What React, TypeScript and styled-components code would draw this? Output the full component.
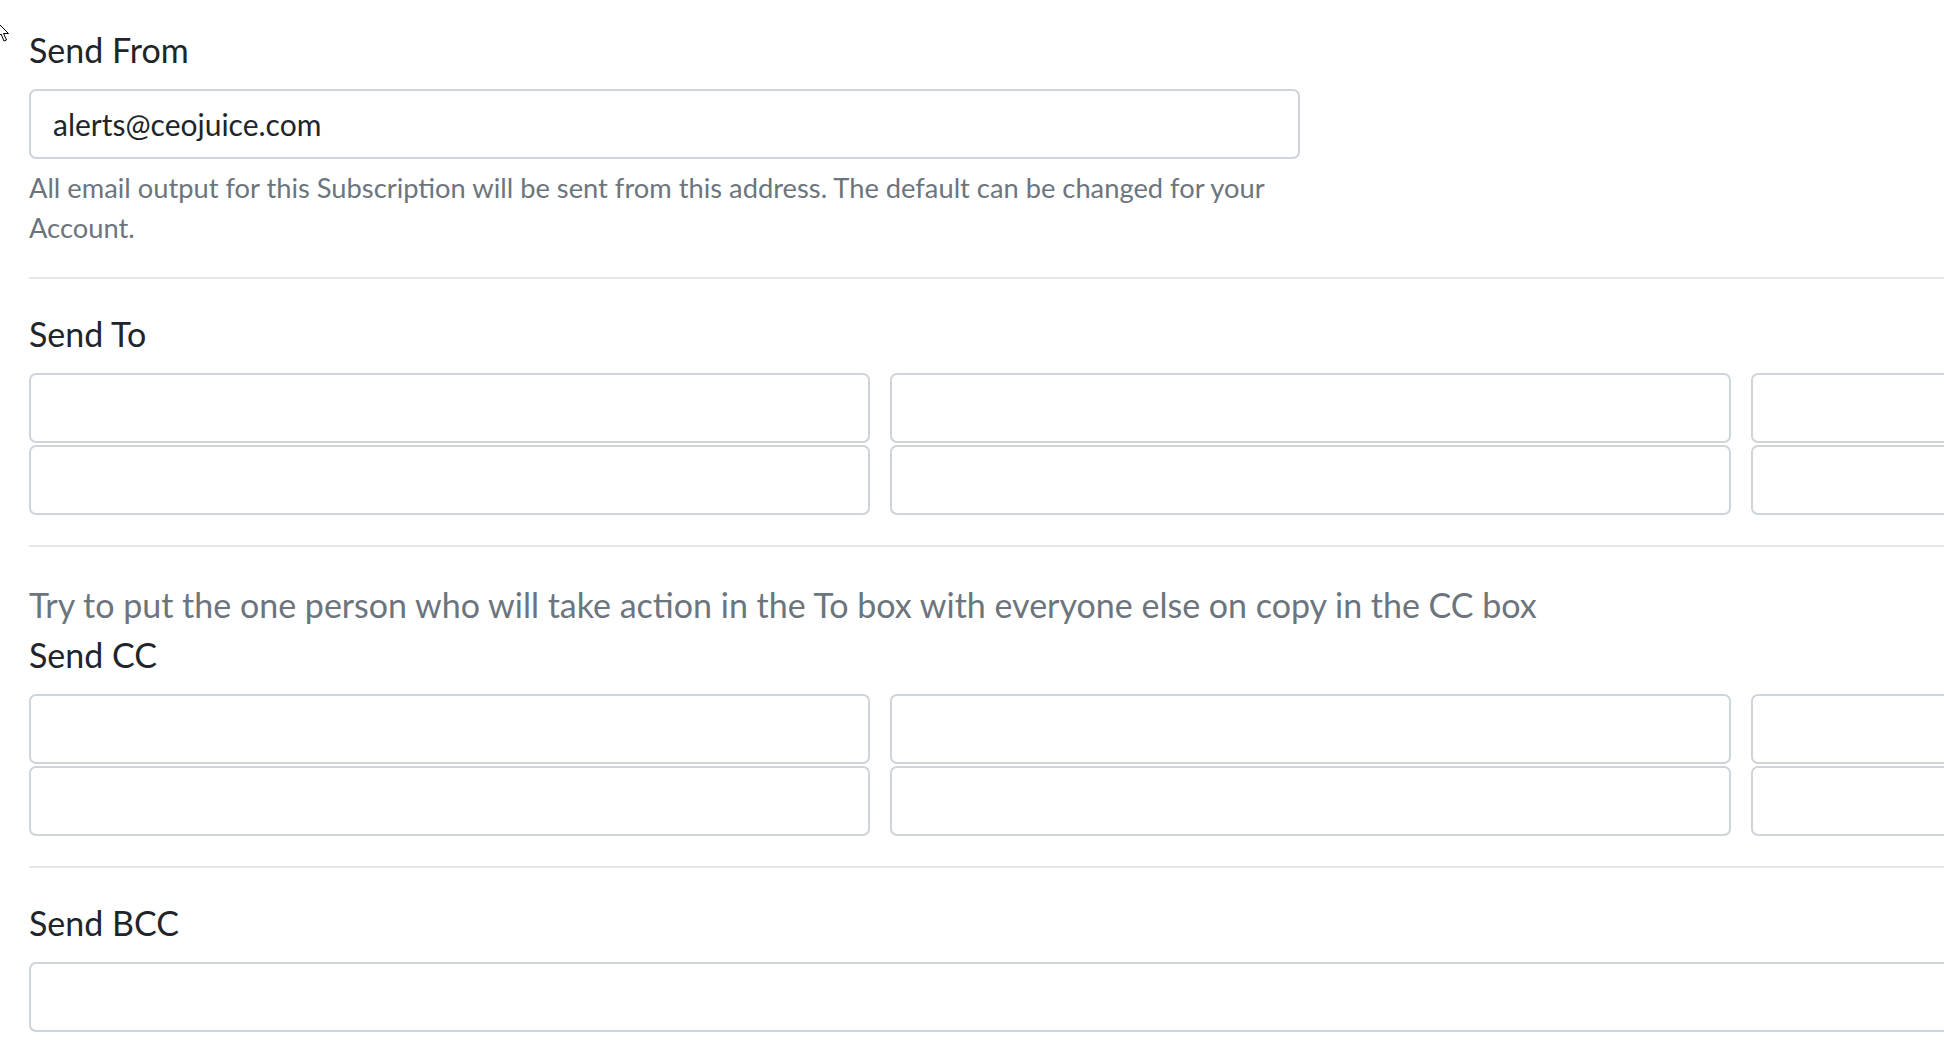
import React from 'react';
import styled, { createGlobalStyle } from 'styled-components';

const GlobalStyle = createGlobalStyle`
  html, body {
    margin: 0;
    padding: 0;
    background: #ffffff;
    overflow: hidden;
  }
  body {
    font-family: Lato, "Open Sans", "Noto Sans", sans-serif;
    color: #212529;
  }
`;

const Page = styled.div`
  position: relative;
  width: 2563px;
  padding: 29px 0 0 29px;
`;

const Cursor = styled.svg`
  position: absolute;
  left: -4px;
  top: 21px;
  width: 14px;
  height: 22px;
`;

const Section = styled.section`
  display: flex;
  flex-direction: column;
`;

const Label = styled.label`
  display: block;
  font-size: 34px;
  line-height: 42px;
  font-weight: 400;
  color: #212529;
  margin-bottom: 18px;
`;

const Note = styled.div`
  margin-top: 3px;
  margin-bottom: 8px;
  font-size: 34px;
  line-height: 42px;
  color: #6c757d;
`;

const Input = styled.input<{ $wide?: boolean }>`
  box-sizing: border-box;
  display: block;
  width: ${(p) => (p.$wide ? '100%' : '1271px')};
  height: 70px;
  padding: 0 22px;
  border: 2px solid #ced4da;
  border-radius: 7px;
  background: #ffffff;
  font-family: inherit;
  font-size: 30px;
  color: #212529;
  outline: none;
`;

const Help = styled.div`
  width: 1271px;
  margin-top: 9px;
  font-size: 27.3px;
  line-height: 40px;
  color: #6c757d;
`;

const Divider = styled.hr<{ $top: number }>`
  margin: ${(p) => p.$top}px 0 34px 0;
  border: 0;
  height: 2px;
  background: #e4e6e8;
`;

const AddressGrid = styled.div`
  display: grid;
  grid-template-columns: repeat(3, 1fr);
  column-gap: 20px;
  row-gap: 2px;
`;

const AddressBox = styled(Input)`
  width: 100%;
`;

const AddressRows: React.FC = () => (
  <AddressGrid>
    {Array.from({ length: 6 }).map((_, i) => (
      <AddressBox key={i} type="text" />
    ))}
  </AddressGrid>
);

const App: React.FC = () => {
  return (
    <>
      <GlobalStyle />
      <Page>
        <Cursor viewBox="0 0 14 22">
          <path
            d="M1 1 L1 17 L5 13 L8 20 L10.5 19 L7.5 12.5 L12.5 12.5 Z"
            fill="#ffffff"
            stroke="#000000"
            strokeWidth="1"
            strokeLinejoin="miter"
          />
        </Cursor>

        <Section>
          <Label>Send From</Label>
          <Input type="text" defaultValue="alerts@ceojuice.com" />
          <Help>
            All email output for this Subscription will be sent from this address. The default can be changed for
            your Account.
          </Help>
        </Section>

        <Divider $top={29} />

        <Section>
          <Label>Send To</Label>
          <AddressRows />
        </Section>

        <Divider $top={30} />

        <Section>
          <Note>Try to put the one person who will take action in the To box with everyone else on copy in the CC box</Note>
          <Label>Send CC</Label>
          <AddressRows />
        </Section>

        <Divider $top={30} />

        <Section>
          <Label>Send BCC</Label>
          <Input type="text" $wide />
        </Section>
      </Page>
    </>
  );
};

export default App;
